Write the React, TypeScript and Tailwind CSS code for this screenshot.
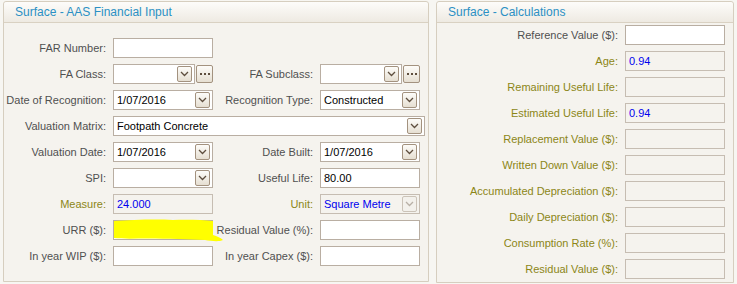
import React from "react";

const GRAY = "text-[#505050]";
const OLIVE = "text-[#8c8616]";

function Chevron({ disabled }: { disabled?: boolean }) {
  return (
    <svg width="9" height="6" viewBox="0 0 9 6">
      <path d="M1 1 L4.5 4.5 L8 1" fill="none" stroke={disabled ? "#b8b0a6" : "#5e4e3e"} strokeWidth="1.3" />
    </svg>
  );
}

function DropBtn({ disabled }: { disabled?: boolean }) {
  return (
    <div
      className={`w-[15px] h-[16px] mr-[2px] flex items-center justify-center rounded-[2px] border ${
        disabled ? "border-[#cbc3b8] bg-[#f3f1ec]" : "border-[#a3927f] bg-gradient-to-b from-[#fdfcf9] to-[#e6dfd2]"
      }`}
    >
      <Chevron disabled={disabled} />
    </div>
  );
}

function Ellipsis() {
  return (
    <div className="w-[17px] h-[18px] flex items-center justify-center gap-[2px] rounded-[2px] border border-[#a3927f] bg-gradient-to-b from-[#fdfcf9] to-[#e6dfd2]">
      <span className="w-[2px] h-[2px] bg-[#5e4e3e]" />
      <span className="w-[2px] h-[2px] bg-[#5e4e3e]" />
      <span className="w-[2px] h-[2px] bg-[#5e4e3e]" />
    </div>
  );
}

type FieldProps = {
  value?: string;
  blue?: boolean;
  disabled?: boolean;
  drop?: boolean;
  dropDisabled?: boolean;
  width?: string;
};

function Field({ value, blue, disabled, drop, dropDisabled, width = "w-[100px]" }: FieldProps) {
  return (
    <div
      className={`${width} h-[20px] shrink-0 flex items-center border ${
        disabled ? "border-[#c6bdb2] bg-[#f5f3ee]" : "border-[#b9aea2] bg-white"
      }`}
    >
      <span className={`flex-1 pl-[3px] text-[11px] leading-none ${blue ? "text-[#0000ee]" : "text-black"}`}>{value}</span>
      {drop && <DropBtn disabled={dropDisabled} />}
    </div>
  );
}

function ComboEllipsis() {
  return (
    <div className="w-[100px] h-[20px] shrink-0 flex items-center gap-[1px]">
      <div className="w-[82px] h-[20px] flex items-center justify-end border border-[#b9aea2] bg-white">
        <DropBtn />
      </div>
      <Ellipsis />
    </div>
  );
}

function Label({ text, olive, width }: { text: string; olive?: boolean; width: string }) {
  return (
    <div className={`${width} shrink-0 text-right pr-[7px] text-[11px] leading-none whitespace-nowrap ${olive ? OLIVE : GRAY}`}>
      {text}
    </div>
  );
}

function Header({ title }: { title: string }) {
  return (
    <div className="h-[21px] shrink-0 flex items-center pl-[11px] border-b border-[#d9d1c2] bg-gradient-to-b from-[#fdfcfa] to-[#eeeae2] rounded-t-[3px]">
      <span className="text-[12px] text-[#2b90c4] leading-none">{title}</span>
    </div>
  );
}

export default function App() {
  const L1 = "w-[109px]";
  const L2 = "w-[107px]";
  return (
    <div className="w-[737px] h-[284px] bg-[#f7f6f2] font-['Liberation_Sans',Arial,sans-serif] flex gap-[7px] pl-[3px] pt-[1px]">
      {/* Left panel */}
      <div className="w-[426px] h-[281px] flex flex-col border border-[#d6cebf] rounded-t-[3px] bg-[#f5f3ee]">
        <Header title="Surface - AAS Financial Input" />
        <div className="flex flex-col gap-[6px] pt-[15px] relative">
          <div className="flex items-center">
            <Label text="FAR Number:" width={L1} />
            <Field />
          </div>
          <div className="flex items-center">
            <Label text="FA Class:" width={L1} />
            <ComboEllipsis />
            <Label text="FA Subclass:" width={L2} />
            <ComboEllipsis />
          </div>
          <div className="flex items-center">
            <Label text="Date of Recognition:" width={L1} />
            <Field value="1/07/2016" drop />
            <Label text="Recognition Type:" width={L2} />
            <Field value="Constructed" drop />
          </div>
          <div className="flex items-center">
            <Label text="Valuation Matrix:" width={L1} />
            <Field value="Footpath Concrete" drop width="w-[312px]" />
          </div>
          <div className="flex items-center">
            <Label text="Valuation Date:" width={L1} />
            <Field value="1/07/2016" drop />
            <Label text="Date Built:" width={L2} />
            <Field value="1/07/2016" drop />
          </div>
          <div className="flex items-center">
            <Label text="SPI:" width={L1} />
            <Field drop />
            <Label text="Useful Life:" width={L2} />
            <Field value="80.00" />
          </div>
          <div className="flex items-center">
            <Label text="Measure:" olive width={L1} />
            <Field value="24.000" blue disabled />
            <Label text="Unit:" olive width={L2} />
            <Field value="Square Metre" blue disabled drop dropDisabled />
          </div>
          <div className="flex items-center relative">
            <Label text="URR ($):" width={L1} />
            <Field />
            <Label text="Residual Value (%):" width={L2} />
            <Field />
            <svg className="absolute left-[109px] top-[-3px]" width="112" height="26" viewBox="0 0 112 26">
              <path
                d="M1 4 C20 3 40 2 60 3 C75 2.5 90 3 100 4 L100 18 C104 19 108 21 110 23 C106 25 98 24 92 23 C75 22 55 22 35 21.5 C22 21.5 10 22 1 21 Z"
                fill="#ffff00"
              />
            </svg>
          </div>
          <div className="flex items-center">
            <Label text="In year WIP ($):" width={L1} />
            <Field />
            <Label text="In year Capex ($):" width={L2} />
            <Field />
          </div>
        </div>
      </div>
      {/* Right panel */}
      <div className="w-[298px] h-[282px] flex flex-col border border-[#d6cebf] rounded-t-[3px] bg-[#f5f3ee]">
        <Header title="Surface - Calculations" />
        <div className="flex flex-col gap-[6px] pt-[2px]">
          {[
            { t: "Reference Value ($):", olive: false, v: "", d: false },
            { t: "Age:", olive: true, v: "0.94", d: true },
            { t: "Remaining Useful Life:", olive: true, v: "", d: true },
            { t: "Estimated Useful Life:", olive: true, v: "0.94", d: true },
            { t: "Replacement Value ($):", olive: true, v: "", d: true },
            { t: "Written Down Value ($):", olive: true, v: "", d: true },
            { t: "Accumulated Depreciation ($):", olive: true, v: "", d: true },
            { t: "Daily Depreciation ($):", olive: true, v: "", d: true },
            { t: "Consumption Rate (%):", olive: true, v: "", d: true },
            { t: "Residual Value ($):", olive: true, v: "", d: true },
          ].map((r) => (
            <div key={r.t} className="flex items-center">
              <Label text={r.t} olive={r.olive} width="w-[188px]" />
              <Field value={r.v} blue disabled={r.d} />
            </div>
          ))}
        </div>
      </div>
    </div>
  );
}
